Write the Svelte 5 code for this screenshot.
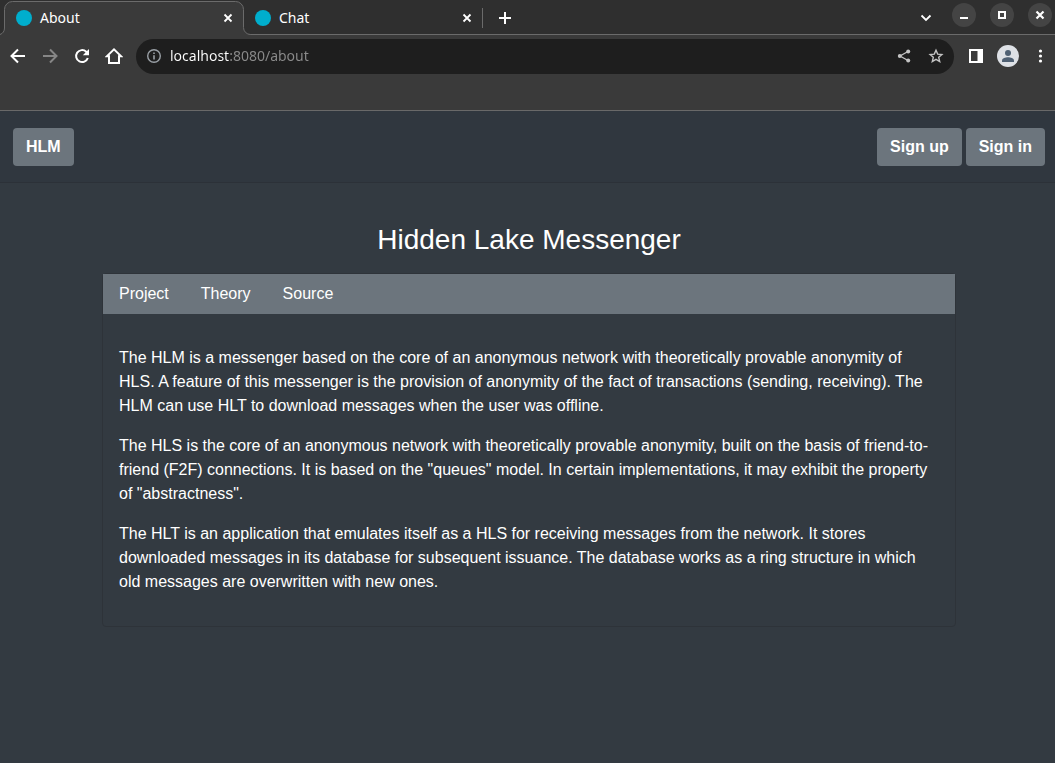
<script>
  const tabs = [
    { title: 'About', active: true },
    { title: 'Chat', active: false },
  ];
  const sections = ['Project', 'Theory', 'Source'];
  const paragraphs = [
    'The HLM is a messenger based on the core of an anonymous network with theoretically provable anonymity of HLS. A feature of this messenger is the provision of anonymity of the fact of transactions (sending, receiving). The HLM can use HLT to download messages when the user was offline.',
    'The HLS is the core of an anonymous network with theoretically provable anonymity, built on the basis of friend-to-friend (F2F) connections. It is based on the "queues" model. In certain implementations, it may exhibit the property of "abstractness".',
    'The HLT is an application that emulates itself as a HLS for receiving messages from the network. It stores downloaded messages in its database for subsequent issuance. The database works as a ring structure in which old messages are overwritten with new ones.',
  ];
  let address = $state('localhost:8080/about');
</script>

<div class="window">
  <div class="chrome">
    <div class="strip">
      {#each tabs as tab}
        <div class="tab" class:active={tab.active}>
          {#if tab.active}
            <svg class="outline" width="253" height="35" viewBox="0 0 253 35" aria-hidden="true">
              <path d="M0 35V34.5C3 33.500 4.500 31 4.500 28V9.500A8 8 0 0 1 12.500 1.500H235.500A8 8 0 0 1 243.500 9.500V27.500A7 7 0 0 0 250.500 34.500V35Z" fill="#3a3a3a" />
              <path d="M0 34.500C3 33.500 4.500 31 4.500 28V9.500A8 8 0 0 1 12.500 1.500H235.500A8 8 0 0 1 243.500 9.500V27.500A7 7 0 0 0 250.500 34.500H253" fill="none" stroke="#6b6b6b" />
            </svg>
          {/if}
          <span class="favicon"></span>
          <span class="title">{tab.title}</span>
          <button class="close" aria-label="Close tab">
            <svg width="16" height="16" viewBox="0 0 16 16"><path d="M4.500 4.500l7 7M11.500 4.500l-7 7" stroke="#fff" stroke-width="1.8" /></svg>
          </button>
        </div>
      {/each}
      <button class="add" aria-label="New tab">
        <svg width="16" height="16" viewBox="0 0 16 16"><path d="M8 2v12M2 8h12" stroke="#fff" stroke-width="2" /></svg>
      </button>
      <button class="search" aria-label="Search tabs">
        <svg width="16" height="16" viewBox="0 0 16 16"><path d="M3.500 5.500L8 10l4.500-4.500" fill="none" stroke="#fff" stroke-width="1.8" /></svg>
      </button>
      <div class="controls">
        <button aria-label="Minimize"><svg width="24" height="24" viewBox="0 0 24 24"><path d="M8 15h8" stroke="#fff" stroke-width="2" /></svg></button>
        <button aria-label="Maximize"><svg width="24" height="24" viewBox="0 0 24 24"><rect x="9" y="9" width="6" height="6" fill="none" stroke="#fff" stroke-width="2" /></svg></button>
        <button aria-label="Close window"><svg width="24" height="24" viewBox="0 0 24 24"><path d="M8.500 8.500l7 7M15.500 8.500l-7 7" stroke="#fff" stroke-width="2.200" /></svg></button>
      </div>
    </div>

    <div class="toolbar">
      <button class="tool" aria-label="Back">
        <svg width="18" height="18" viewBox="0 0 18 18"><path d="M16 9H3M9 2.500L2.500 9 9 15.500" fill="none" stroke="#fff" stroke-width="2" /></svg>
      </button>
      <button class="tool" aria-label="Forward">
        <svg width="18" height="18" viewBox="0 0 18 18"><path d="M2 9h13M9 2.500L15.500 9 9 15.500" fill="none" stroke="#868686" stroke-width="2" /></svg>
      </button>
      <button class="tool" aria-label="Reload">
        <svg width="18" height="18" viewBox="0 0 18 18"><path d="M14.800 11A6 6 0 1 1 13.200 4.700L14.500 6" fill="none" stroke="#fff" stroke-width="2" /><path d="M16 2v6.200H9.800Z" fill="#fff" /></svg>
      </button>
      <button class="tool" aria-label="Home">
        <svg width="18" height="18" viewBox="0 0 18 18"><path d="M1.800 9.300H4V16h10V9.300h2.200L9 2.300Z" fill="none" stroke="#fff" stroke-width="2" /></svg>
      </button>
      <div class="omnibox">
        <svg class="info" width="16" height="16" viewBox="0 0 16 16" aria-hidden="true"><circle cx="8" cy="8" r="6.300" fill="none" stroke="#9aa0a6" stroke-width="1.400" /><path d="M8 7.200v4.200M8 4.500v1.600" stroke="#9aa0a6" stroke-width="1.600" /></svg>
        <input type="text" aria-label="Address" spellcheck="false" bind:value={address} />
        <button class="tool" aria-label="Share">
          <svg width="16" height="16" viewBox="0 0 16 16"><path d="M12 3.500L4 8l8 4.500" fill="none" stroke="#c4c4c4" stroke-width="1.300" /><g fill="#c4c4c4"><circle cx="12.200" cy="3.600" r="2" /><circle cx="3.800" cy="8" r="2" /><circle cx="12.200" cy="12.400" r="2" /></g></svg>
        </button>
        <button class="tool" aria-label="Bookmark">
          <svg width="16" height="16" viewBox="0 0 16 16"><path d="M8 2.200L9.700 6.100 13.900 6.500 10.700 9.300 11.700 13.500 8 11.300 4.300 13.500 5.300 9.300 2.100 6.500 6.300 6.100Z" fill="none" stroke="#c4c4c4" stroke-width="1.400" /></svg>
        </button>
      </div>
      <div class="end">
        <button class="tool" aria-label="Side panel">
          <svg width="16" height="16" viewBox="0 0 16 16"><path fill="#fff" fill-rule="evenodd" d="M1 1h14v14H1ZM3 3v10h6.500V3Z" /></svg>
        </button>
        <button class="tool" aria-label="Profile">
          <svg width="22" height="22" viewBox="0 0 22 22"><circle cx="11" cy="11" r="11" fill="#dee1e6" /><circle cx="11" cy="8" r="3" fill="#4f6073" /><path d="M5 17v-1.500C5 13.500 8.500 12.300 11 12.300s6 1.200 6 3.200V17Z" fill="#4f6073" /></svg>
        </button>
        <button class="tool menu" aria-label="Menu">
          <svg width="17" height="18" viewBox="0 0 17 18" fill="#fff"><circle cx="9.500" cy="4" r="1.600" /><circle cx="9.500" cy="9" r="1.600" /><circle cx="9.500" cy="14" r="1.600" /></svg>
        </button>
      </div>
    </div>
  </div>

  <header>
    <a class="btn" href="#home">HLM</a>
    <nav>
      <a class="btn" href="#signup">Sign up</a>
      <a class="btn" href="#signin">Sign in</a>
    </nav>
  </header>

  <main>
    <h1>Hidden Lake Messenger</h1>
    <section class="card">
      <nav class="links">
        {#each sections as name}
          <a href={'#' + name.toLowerCase()}>{name}</a>
        {/each}
      </nav>
      <div class="body">
        {#each paragraphs as text}
          <p>{text}</p>
        {/each}
      </div>
    </section>
  </main>
</div>

<style>
  :global(body) {
    margin: 0;
    background: #333a41;
  }
  .window {
    min-height: 100vh;
    background: #333a41;
    color: #fff;
    font: 16px/24px "Liberation Sans", Arial, sans-serif;
  }
  button {
    display: flex;
    align-items: center;
    justify-content: center;
    padding: 0;
    border: 0;
    background: none;
    cursor: pointer;
  }
  a {
    color: #fff;
    text-decoration: none;
  }
  .chrome {
    background: #3a3a3a;
    border-bottom: 1px solid #696969;
    font: 14px/20px "Noto Sans", sans-serif;
  }
  .strip {
    display: flex;
    align-items: center;
    box-sizing: border-box;
    height: 35px;
    padding: 1px 3px 0 4px;
    background: #2f2f2f;
    box-shadow: inset 0 -1px #6b6b6b;
  }
  .tab {
    position: relative;
    display: flex;
    align-items: center;
    box-sizing: border-box;
    width: 239px;
    height: 20px;
    padding: 0 7px 0 12px;
  }
  .tab:not(.active) {
    width: 240px;
    border-right: 1px solid #6b6b6b;
  }
  .outline {
    position: absolute;
    left: -4px;
    top: -8px;
  }
  .favicon {
    position: relative;
    width: 16px;
    height: 16px;
    margin-right: 8px;
    border-radius: 50%;
    background: #00aecd;
  }
  .title {
    position: relative;
    flex: 1;
  }
  .close {
    position: relative;
  }
  .add {
    width: 44px;
    height: 28px;
  }
  .search {
    width: 28px;
    height: 28px;
    margin-left: auto;
  }
  .controls {
    display: flex;
    gap: 14px;
    padding: 0 0 6px 12px;
  }
  .controls button {
    border-radius: 50%;
    background: #444;
  }
  .toolbar {
    display: flex;
    align-items: flex-start;
    padding: 4px 0 36px 2px;
  }
  .tool {
    flex: none;
    width: 32px;
    height: 34px;
  }
  .menu {
    width: 31px;
  }
  .omnibox {
    flex: 1;
    display: flex;
    align-items: center;
    box-sizing: border-box;
    height: 35px;
    margin: 0 6px;
    padding: 0 2px 1px 10px;
    border-radius: 18px;
    background: #1e1e1e;
  }
  .info {
    flex: none;
    margin-right: 8px;
  }
  input {
    flex: 1;
    min-width: 0;
    padding: 0;
    border: 0;
    outline: 0;
    font: inherit;
    color: transparent;
    background: linear-gradient(90deg, #fff 60px, #8b8b8b 60px);
    background-clip: text;
    -webkit-background-clip: text;
    caret-color: #fff;
  }
  .end {
    display: flex;
  }
  header {
    display: flex;
    justify-content: space-between;
    padding: 17px 10px 16px 13px;
    background: #30373f;
    border-bottom: 1px solid #2c3138;
  }
  header nav {
    display: flex;
    gap: 4px;
  }
  .btn {
    padding: 7px 13px;
    border-radius: 4px;
    background: #6c757d;
    font-weight: bold;
  }
  main {
    padding: 40px 99px 48px 102px;
  }
  h1 {
    margin: 0 0 16px;
    font-size: 28px;
    line-height: 34px;
    font-weight: normal;
    text-align: center;
  }
  .card {
    border: 1px solid #2e3339;
    border-radius: 4px;
  }
  .links {
    display: flex;
    background: #6c757d;
  }
  .links a {
    padding: 8px 16px;
  }
  .body {
    padding: 32px 16px;
  }
  p {
    margin: 0;
  }
  p + p {
    margin-top: 16px;
  }
</style>
